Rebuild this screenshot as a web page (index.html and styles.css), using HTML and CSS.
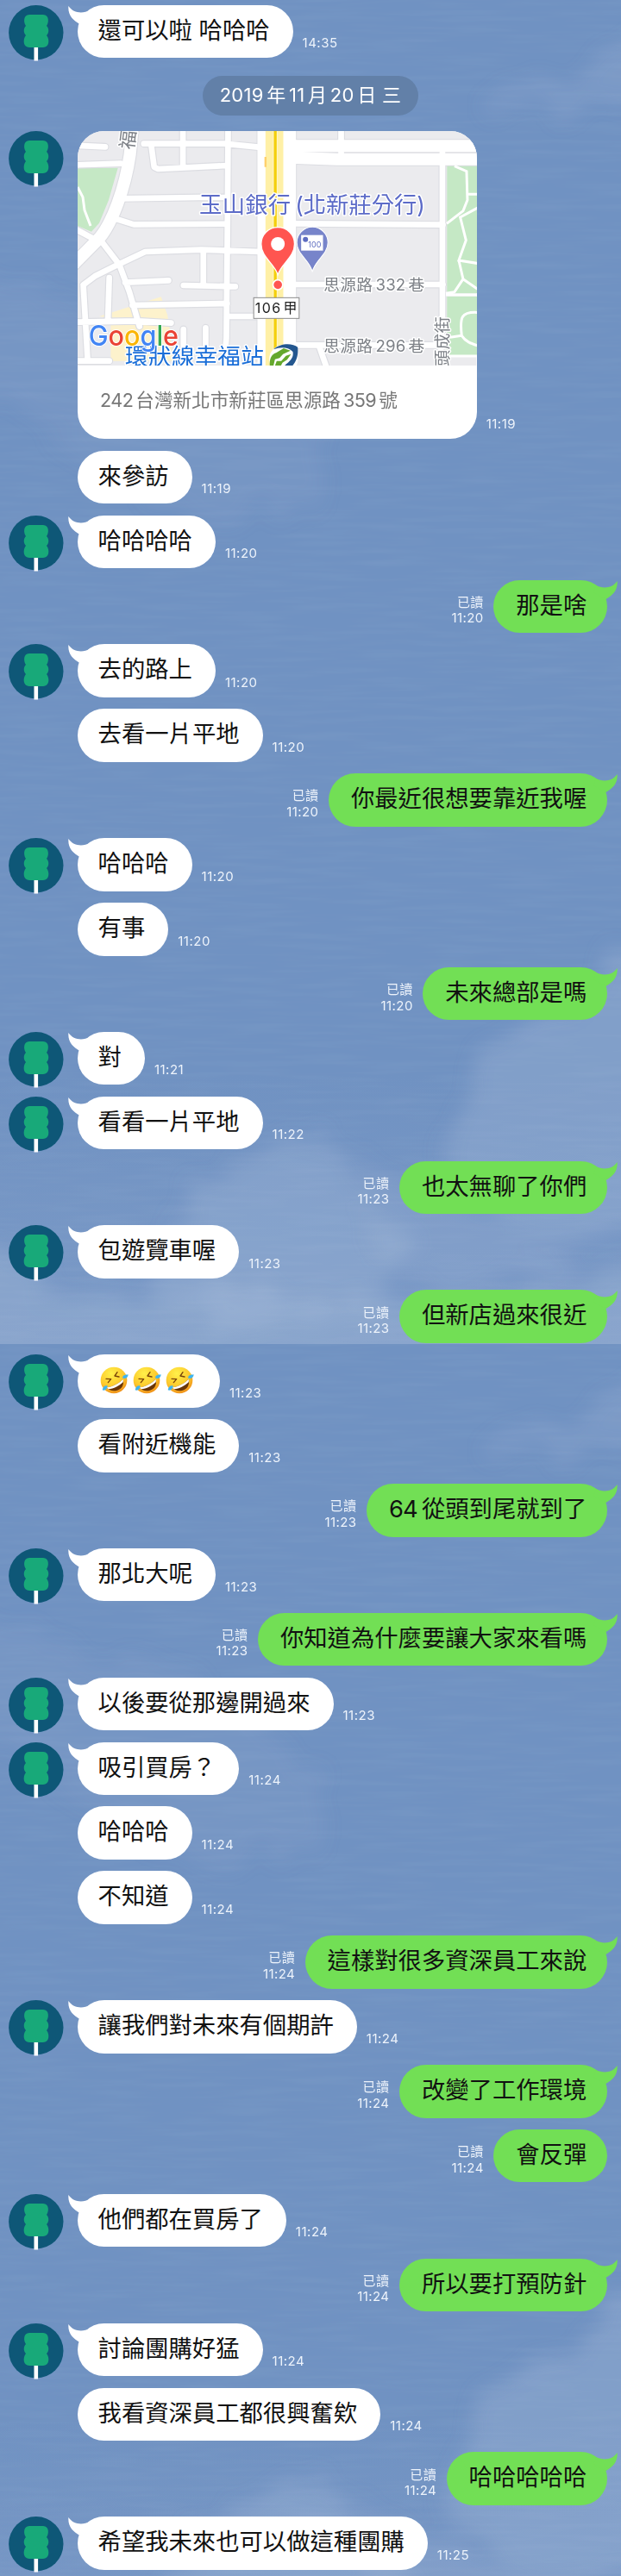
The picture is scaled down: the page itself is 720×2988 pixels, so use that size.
FILE: index.html
```html
<!DOCTYPE html>
<html lang="zh-Hant">
<head>
  <meta charset="UTF-8" />
  <title>聊天</title>
  <meta name="viewport" content="width=device-width, initial-scale=1.0" />
  <link rel="stylesheet" href="styles.css">
</head>
<body>

  <!-- shared shapes -->
  <svg class="defs" aria-hidden="true">
    <defs>
      <symbol id="avatar" viewBox="0 0 64 65">
        <circle cx="31.8" cy="31.8" r="31.7" fill="#0e5777"/>
        <rect x="29.5" y="47" width="4.6" height="17.5" fill="#fff"/>
        <path d="M24 11h16c7 0 7 9 4 13 3 3 3 8 0 11 4 5 3 14-4 14H24c-7 0-8-9-4-14-3-3-3-8 0-11-3-4-3-13 4-13z" fill="#18a979"/>
      </symbol>
      <symbol id="tail" viewBox="0 0 28 26">
        <path d="M.4 1C-.6 11 5.500 18 13.500 22L28 14 25 6C17 10 6 9.500 .4 1z"/>
      </symbol>
      <radialGradient id="face" cx=".4" cy=".25" r=".8">
        <stop offset="0" stop-color="#fff04a"/>
        <stop offset=".6" stop-color="#fdc92c"/>
        <stop offset="1" stop-color="#ee8a17"/>
      </radialGradient>
      <symbol id="rofl" viewBox="0 0 102 96">
        <circle cx="48" cy="48" r="46" fill="url(#face)"/>
        <path d="M21 43l17 1-10 12M60 20l-9 13 15 3" fill="none" stroke="#7a4409" stroke-width="4" stroke-linecap="round" stroke-linejoin="round"/>
        <path d="M23 73C45 70 66 59 80 44c5 20-5 34-20 39-14 4-28 1-37-10z" fill="#6a3508"/>
        <path d="M23 73C45 70 66 59 80 44c1 4 1 7 0 11C66 68 48 78 29 79z" fill="#fff"/>
        <path d="M78 40c1-10 10-11 20-12 0 10-9 18-20 12zM26 67c-11-1-16 5-18 15 9 4 18-4 18-15z" fill="#3fb4ee"/>
      </symbol>
      <filter id="cloudy" x="-20%" y="-20%" width="140%" height="140%">
        <feTurbulence type="fractalNoise" baseFrequency=".022" numOctaves="4" seed="8" result="n"/>
        <feDisplacementMap in="SourceGraphic" in2="n" scale="60" xChannelSelector="R" yChannelSelector="G"/>
        <feGaussianBlur stdDeviation="11"/>
      </filter>
      <filter id="ripple" x="0" y="0" width="100%" height="100%">
        <feTurbulence type="fractalNoise" baseFrequency=".012 .16" numOctaves="2" seed="3"/>
        <feColorMatrix values="0 0 0 0 1  0 0 0 0 1  0 0 0 0 1  .9 0 0 0 -.3"/>
      </filter>
      <linearGradient id="sky" x1="0" y1="0" x2="0" y2="1">
        <stop offset="0" stop-color="#7092c2"/>
        <stop offset=".8" stop-color="#7092c2"/>
        <stop offset="1" stop-color="#7b9ac7"/>
      </linearGradient>
      <symbol id="wallpaper" viewBox="0 0 720 1559">
        <rect width="720" height="1559" fill="url(#sky)"/>
        <g filter="url(#cloudy)" fill="#b9c9e0">
          <path d="M780 1085L710 1115 675 1160 610 1190 565 1215 540 1290 520 1350 580 1410 650 1440 780 1420z" opacity=".24"/>
          <path d="M350 1315L290 1345 240 1370 200 1430 170 1480 250 1540 430 1520 480 1440 440 1400 400 1350z" opacity=".24"/>
          <path d="M-60 1400L0 1440 60 1510 250 1490 500 1520 780 1470V1640H-60z" opacity=".25"/>
          <path d="M430 1330L460 1370 560 1400 680 1470 520 1500 420 1450z" opacity=".16"/>
          <path d="M760 35L700 60 670 95 600 95 560 125 640 125 760 110z" opacity=".16"/>
          <path d="M-40 310L60 350 220 380 370 500 380 590 200 600 60 490 -40 450z" opacity=".09"/>
        </g>
        <rect width="720" height="1559" filter="url(#ripple)" opacity=".08"/>
      </symbol>
    </defs>
  </svg>

  <div class="chat">
    <div class="wallpaper">
      <svg><use href="#wallpaper"/></svg>
      <svg><use href="#wallpaper"/></svg>
    </div>

    <div class="row">
      <svg class="avatar"><use href="#avatar"/></svg>
      <div class="bubble"><svg class="tail"><use href="#tail"/></svg>還可以啦 哈哈哈</div>
      <span class="meta">14:35</span>
    </div>

    <div class="date"><span>2019</span>年<span>11</span>月<span>20</span>日 三</div>

    <div class="row place">
      <svg class="avatar"><use href="#avatar"/></svg>
      <div class="card">
        <svg class="map" viewBox="0 0 1386 816" preserveAspectRatio="none">
          <defs>
            <g id="roads" fill="none" stroke-linejoin="round">
              <path class="r40" d="M190 0L182 80C165 200 120 320 76 372L-20 470"/>
              <path class="r22" d="M230 44H510L650 58M-10 50L96 55M-10 118L150 113M366 0V128M256 50L266 125 280 132 520 120M523 0L521 320 517 720 508 830M145 235L420 231H520M115 300L195 325 520 323M140 465L235 420 430 413 640 420M76 375L145 465 180 560 215 680M20 535L60 505 150 460M-10 340L50 372 76 375M165 527L316 520M368 537L548 541M437 420V530M190 606L520 600M110 510L105 660M20 540L35 800M-10 665L210 661 325 668M368 690V770M445 685V770M520 645H640M-10 800H110M760 322L1270 326M760 534H1270M760 745H1270M840 750L868 830M916 0V80M1268 60V660L1258 830"/>
              <path class="r40" d="M750 52H1400M740 92L900 98H1400"/>
            </g>
          </defs>
          <rect width="1386" height="816" fill="#ebebee"/>
          <path d="M0 128H140L108 240 75 320 48 350 0 330zM1284 120H1400V565H1284zM1284 575H1400V783H1284z" fill="#c5e8c5"/>
          <path d="M75 645L290 577 312 640 322 700 330 800H115V650z" fill="#fdf2cc"/>
          <use href="#roads" class="casing"/>
          <path d="M692 0V816" stroke="#dcdde2" stroke-width="140"/>
          <path d="M692 0V816" stroke="#fff" stroke-width="134"/>
          <use href="#roads" class="road"/>
          <path d="M0 195L18 230 24 275 45 330M1310 122L1352 140 1355 240 1340 278 1283 322M1355 220H1390M1400 262L1330 300 1350 380 1325 450 1400 462M1325 450L1340 515 1310 560 1280 565M1340 515L1390 550M1280 570H1400M1280 783H1400M1400 632C1330 625 1328 650 1335 712L1295 718M1335 712C1350 735 1370 740 1400 750" fill="none" stroke="#fff" stroke-width="9"/>
          <path d="M684 0V816" stroke="#fff0a6" stroke-width="62"/>
          <path d="M687 0V816" stroke="#fff" stroke-width="16" opacity=".45"/>
          <path d="M687 0V816" stroke="#f4cf0b" stroke-width="10"/>
          <path d="M653 90V125" stroke="#ffd06a" stroke-width="7"/>

          <g class="label grey">
            <text x="0" y="0" font-size="66" transform="translate(194 66) rotate(-83)">福</text>
            <text y="556" font-size="56"><tspan x="855" textLength="170">思源路</tspan><tspan x="1036" textLength="104">332</tspan><tspan x="1150">巷</tspan></text>
            <text y="768" font-size="56"><tspan x="855" textLength="170">思源路</tspan><tspan x="1036" textLength="104">296</tspan><tspan x="1150">巷</tspan></text>
            <text x="0" y="0" font-size="57" textLength="172" transform="translate(1289 818) rotate(-90)">頭成街</text>
          </g>
          <text class="label bank" y="284" font-size="79"><tspan x="423" textLength="318">玉山銀行</tspan><tspan x="756" textLength="452">(北新莊分行)</tspan></text>
          <text class="label station" x="165" y="813" font-size="80" textLength="482">環狀線幸福站</text>

          <path d="M816 490C808 450 762 430 762 388a54 54 0 0 1 108 0C870 430 824 450 816 490z" fill="#7784ca" stroke="#fff" stroke-width="3"/>
          <rect x="777" y="362" width="76" height="54" fill="#fff"/>
          <circle cx="792" cy="377" r="9" fill="#5d6cc0"/>
          <text x="801" y="404" font-size="27" textLength="46" class="hundred">100</text>

          <path d="M696 500C684 460 638 440 638 393a58 58 0 0 1 116 0C754 440 708 460 696 500z" fill="#ff5550" stroke="#fff" stroke-width="4"/>
          <circle cx="696" cy="393" r="24" fill="#fff"/>
          <circle cx="696" cy="535" r="17" fill="#ff5550" stroke="#fff" stroke-width="5"/>

          <rect x="612" y="580" width="158" height="72" fill="#fff" stroke="#8b8b8b" stroke-width="3"/>
          <text class="exit" y="633" font-size="48"><tspan x="617" textLength="88">106</tspan><tspan x="715">甲</tspan></text>

          <circle cx="716" cy="794" r="50" fill="#fff"/>
          <path d="M681 760C706 736 748 738 765 752 768 785 758 806 742 822H712C738 802 752 790 748 768 730 750 704 752 681 760z" fill="#24578f"/>
          <path d="M668 816C666 790 676 776 690 772L716 756 740 764 714 776 702 790 686 794 680 820zM692 800L708 800 724 782 742 776 728 796 712 806 704 822H684z" fill="#65a82d"/>

          <text class="google" x="38" y="747" font-size="97" textLength="313" lengthAdjust="spacingAndGlyphs"><tspan fill="#4285f4">G</tspan><tspan fill="#ea4335">o</tspan><tspan fill="#fbb605">o</tspan><tspan fill="#4285f4">g</tspan><tspan fill="#34a853">l</tspan><tspan fill="#ea4335">e</tspan></text>
        </svg>
        <p class="address"><span>242</span>台灣新北市新莊區思源路<span>359</span>號</p>
      </div>
      <span class="meta">11:19</span>
    </div>

    <div class="row next">
      <div class="bubble">來參訪</div>
      <span class="meta">11:19</span>
    </div>
    <div class="row">
      <svg class="avatar"><use href="#avatar"/></svg>
      <div class="bubble"><svg class="tail"><use href="#tail"/></svg>哈哈哈哈</div>
      <span class="meta">11:20</span>
    </div>
    <div class="row mine">
      <span class="meta">已讀<br>11:20</span>
      <div class="bubble">那是啥<svg class="tail"><use href="#tail"/></svg></div>
    </div>
    <div class="row">
      <svg class="avatar"><use href="#avatar"/></svg>
      <div class="bubble"><svg class="tail"><use href="#tail"/></svg>去的路上</div>
      <span class="meta">11:20</span>
    </div>
    <div class="row next">
      <div class="bubble">去看一片平地</div>
      <span class="meta">11:20</span>
    </div>
    <div class="row mine">
      <span class="meta">已讀<br>11:20</span>
      <div class="bubble">你最近很想要靠近我喔<svg class="tail"><use href="#tail"/></svg></div>
    </div>
    <div class="row">
      <svg class="avatar"><use href="#avatar"/></svg>
      <div class="bubble"><svg class="tail"><use href="#tail"/></svg>哈哈哈</div>
      <span class="meta">11:20</span>
    </div>
    <div class="row next">
      <div class="bubble">有事</div>
      <span class="meta">11:20</span>
    </div>
    <div class="row mine">
      <span class="meta">已讀<br>11:20</span>
      <div class="bubble">未來總部是嗎<svg class="tail"><use href="#tail"/></svg></div>
    </div>
    <div class="row">
      <svg class="avatar"><use href="#avatar"/></svg>
      <div class="bubble"><svg class="tail"><use href="#tail"/></svg>對</div>
      <span class="meta">11:21</span>
    </div>
    <div class="row">
      <svg class="avatar"><use href="#avatar"/></svg>
      <div class="bubble"><svg class="tail"><use href="#tail"/></svg>看看一片平地</div>
      <span class="meta">11:22</span>
    </div>
    <div class="row mine">
      <span class="meta">已讀<br>11:23</span>
      <div class="bubble">也太無聊了你們<svg class="tail"><use href="#tail"/></svg></div>
    </div>
    <div class="row">
      <svg class="avatar"><use href="#avatar"/></svg>
      <div class="bubble"><svg class="tail"><use href="#tail"/></svg>包遊覽車喔</div>
      <span class="meta">11:23</span>
    </div>
    <div class="row mine">
      <span class="meta">已讀<br>11:23</span>
      <div class="bubble">但新店過來很近<svg class="tail"><use href="#tail"/></svg></div>
    </div>
    <div class="row">
      <svg class="avatar"><use href="#avatar"/></svg>
      <div class="bubble emoji"><svg class="tail"><use href="#tail"/></svg><svg class="rofl"><use href="#rofl"/></svg><svg class="rofl"><use href="#rofl"/></svg><svg class="rofl"><use href="#rofl"/></svg></div>
      <span class="meta">11:23</span>
    </div>
    <div class="row next">
      <div class="bubble">看附近機能</div>
      <span class="meta">11:23</span>
    </div>
    <div class="row mine">
      <span class="meta">已讀<br>11:23</span>
      <div class="bubble"><span class="num">64</span>從頭到尾就到了<svg class="tail"><use href="#tail"/></svg></div>
    </div>
    <div class="row">
      <svg class="avatar"><use href="#avatar"/></svg>
      <div class="bubble"><svg class="tail"><use href="#tail"/></svg>那北大呢</div>
      <span class="meta">11:23</span>
    </div>
    <div class="row mine">
      <span class="meta">已讀<br>11:23</span>
      <div class="bubble">你知道為什麼要讓大家來看嗎<svg class="tail"><use href="#tail"/></svg></div>
    </div>
    <div class="row">
      <svg class="avatar"><use href="#avatar"/></svg>
      <div class="bubble"><svg class="tail"><use href="#tail"/></svg>以後要從那邊開過來</div>
      <span class="meta">11:23</span>
    </div>
    <div class="row">
      <svg class="avatar"><use href="#avatar"/></svg>
      <div class="bubble"><svg class="tail"><use href="#tail"/></svg>吸引買房？</div>
      <span class="meta">11:24</span>
    </div>
    <div class="row next">
      <div class="bubble">哈哈哈</div>
      <span class="meta">11:24</span>
    </div>
    <div class="row next">
      <div class="bubble">不知道</div>
      <span class="meta">11:24</span>
    </div>
    <div class="row mine">
      <span class="meta">已讀<br>11:24</span>
      <div class="bubble">這樣對很多資深員工來說<svg class="tail"><use href="#tail"/></svg></div>
    </div>
    <div class="row">
      <svg class="avatar"><use href="#avatar"/></svg>
      <div class="bubble"><svg class="tail"><use href="#tail"/></svg>讓我們對未來有個期許</div>
      <span class="meta">11:24</span>
    </div>
    <div class="row mine">
      <span class="meta">已讀<br>11:24</span>
      <div class="bubble">改變了工作環境<svg class="tail"><use href="#tail"/></svg></div>
    </div>
    <div class="row mine">
      <span class="meta">已讀<br>11:24</span>
      <div class="bubble">會反彈</div>
    </div>
    <div class="row">
      <svg class="avatar"><use href="#avatar"/></svg>
      <div class="bubble"><svg class="tail"><use href="#tail"/></svg>他們都在買房了</div>
      <span class="meta">11:24</span>
    </div>
    <div class="row mine">
      <span class="meta">已讀<br>11:24</span>
      <div class="bubble">所以要打預防針<svg class="tail"><use href="#tail"/></svg></div>
    </div>
    <div class="row">
      <svg class="avatar"><use href="#avatar"/></svg>
      <div class="bubble"><svg class="tail"><use href="#tail"/></svg>討論團購好猛</div>
      <span class="meta">11:24</span>
    </div>
    <div class="row next">
      <div class="bubble">我看資深員工都很興奮欸</div>
      <span class="meta">11:24</span>
    </div>
    <div class="row mine">
      <span class="meta">已讀<br>11:24</span>
      <div class="bubble">哈哈哈哈哈<svg class="tail"><use href="#tail"/></svg></div>
    </div>
    <div class="row">
      <svg class="avatar"><use href="#avatar"/></svg>
      <div class="bubble"><svg class="tail"><use href="#tail"/></svg>希望我未來也可以做這種團購</div>
      <span class="meta">11:25</span>
    </div>
  </div>

</body>
</html>
```
FILE: styles.css
```css
* {
  box-sizing: border-box;
}

body {
  margin: 0;
  background: #7092c2;
  font-family: Inter, "Noto Sans CJK TC", sans-serif;
}

.defs {
  position: absolute;
  width: 0;
  height: 0;
}

.chat {
  position: relative;
  width: 720px;
  height: 2988px;
  padding-top: 5.6px;
  overflow: hidden;
}

/* the wallpaper repeats down the conversation */
.wallpaper {
  position: absolute;
  inset: 0;
  z-index: -1;
  overflow: hidden;
}

.wallpaper svg {
  display: block;
  width: 720px;
  height: 1559px;
}

.row {
  display: flex;
  height: 61.5px;
  margin-bottom: 13.4px;
  padding-left: 9.7px;
}

.row.next {
  padding-left: 90.4px;
}

.row.mine {
  justify-content: flex-end;
  padding: 0 15.6px 0 0;
}

.row.place {
  height: 357px;
}

.avatar {
  flex: none;
  width: 64px;
  height: 65px;
  margin-right: 16.7px;
}

.bubble {
  position: relative;
  flex: none;
  height: 61.5px;
  padding: 0 27px 0 23.2px;
  border-radius: 31px;
  background: #fff;
  color: #111;
  font-size: 27.33px;
  line-height: 60px;
  white-space: nowrap;
}

.mine .bubble {
  padding: 0 24.2px 0 26px;
  background: #72df55;
}

.tail {
  position: absolute;
  top: 0;
  left: -11.5px;
  width: 28px;
  height: 26px;
  fill: #fff;
}

.mine .tail {
  left: auto;
  right: -11.5px;
  fill: #72df55;
  transform: scaleX(-1);
}

.num {
  margin-right: 5px;
  letter-spacing: -0.8px;
}

.emoji {
  display: flex;
  align-items: center;
  gap: 4px;
  width: 164.5px;
  padding: 0 0 2px 26px;
}

.rofl {
  width: 34px;
  height: 32px;
}

.meta {
  align-self: flex-end;
  margin: 0 11px 7.5px;
  color: #edf3fb;
  font-size: 15px;
  line-height: 18.4px;
  letter-spacing: 0.5px;
  text-align: right;
}

.mine .meta {
  margin-right: 11.5px;
  letter-spacing: 0.4px;
}

.date {
  width: 250.5px;
  height: 46.3px;
  margin: 21px auto 18px;
  border-radius: 23.2px;
  background: #6280a8;
  color: #fff;
  font-size: 22px;
  line-height: 45px;
  letter-spacing: 0.3px;
  text-align: center;
  white-space: nowrap;
}

.date span {
  margin: 0 3.5px;
}

.date span:first-child {
  margin-left: 0;
}

.card {
  flex: none;
  width: 462.3px;
  height: 357px;
  overflow: hidden;
  border-radius: 31px;
  background: #fff;
}

.map {
  display: block;
  width: 462.3px;
  height: 272px;
}

/* roads are drawn twice: grey edge first, white on top */
.casing {
  --extra: 7px;
  stroke: #dcdde2;
}

.road {
  --extra: 0px;
  stroke: #fff;
}

.casing,
.road {
  stroke-linecap: round;
}

.r22 {
  stroke-width: calc(20px + var(--extra));
}

.r40 {
  stroke-width: calc(42px + var(--extra));
}

.label {
  stroke: #fff;
  stroke-width: 9px;
  stroke-linejoin: round;
  paint-order: stroke;
}

.grey {
  fill: #7d8187;
}

.bank {
  fill: #5c6bc8;
}

.station {
  fill: #1a6ed8;
}

.exit {
  fill: #222;
}

.hundred {
  fill: #5d6cc0;
}

.google {
  font-weight: 500;
  stroke: #fff;
  stroke-width: 6px;
  paint-order: stroke;
}

.address {
  margin: 0;
  padding-left: 25.5px;
  color: #777;
  font-size: 21.6px;
  line-height: 80px;
  white-space: nowrap;
}

.address span {
  margin: 0 3px;
  letter-spacing: -0.5px;
}

.address span:first-child {
  margin-left: 0;
}
```
